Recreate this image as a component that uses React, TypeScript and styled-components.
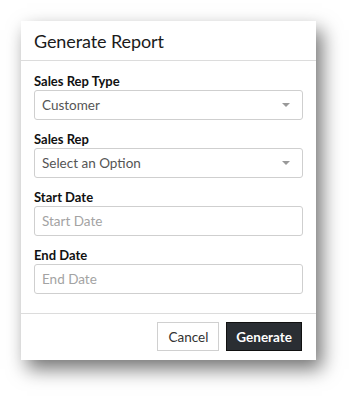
import React from "react";
import styled, { createGlobalStyle } from "styled-components";

const Global = createGlobalStyle`
  html, body { margin: 0; padding: 0; background: #ffffff; }
  body { font-family: Lato, "Liberation Sans", sans-serif; }
  * { box-sizing: border-box; }
`;

const Page = styled.div`
  padding: 21px 0 0 21px;
  width: 358px;
  height: 402px;
`;

const Card = styled.div`
  width: 295px;
  background: #fff;
  box-shadow: 6px 9px 18px rgba(0, 0, 0, 0.55);
  display: flex;
  flex-direction: column;
`;

const Header = styled.div`
  height: 40px;
  padding: 0 13px;
  display: flex;
  align-items: center;
  border-bottom: 1px solid #dcdcdc;
`;

const Title = styled.h1`
  margin: 0;
  font-size: 18px;
  font-weight: 400;
  color: #1b1b1b;
  letter-spacing: -0.1px;
`;

const Body = styled.div`
  padding: 11px 13px 19px;
  display: flex;
  flex-direction: column;
  gap: 10px;
`;

const Field = styled.div`
  display: flex;
  flex-direction: column;
`;

const Label = styled.label`
  font-size: 13px;
  font-weight: 700;
  line-height: 18px;
  color: #111;
`;

const Box = styled.div<{ $placeholder?: boolean }>`
  height: 30px;
  border: 1px solid #cfcfcf;
  border-radius: 3px;
  padding: 0 12px 0 7px;
  display: flex;
  align-items: center;
  justify-content: space-between;
  font-size: 13.5px;
  color: ${(p) => (p.$placeholder ? "#a3a3a3" : "#555")};
`;

const Caret = styled.span`
  width: 0;
  height: 0;
  border-left: 4px solid transparent;
  border-right: 4px solid transparent;
  border-top: 4px solid #999;
`;

const Footer = styled.div`
  border-top: 1px solid #dcdcdc;
  padding: 8px 14px 9px;
  display: flex;
  justify-content: flex-end;
  gap: 7px;
`;

const Button = styled.button<{ $primary?: boolean }>`
  height: 29px;
  padding: 0 ${(p) => (p.$primary ? "9px" : "10px")};
  font-family: Lato, "Liberation Sans", sans-serif;
  font-size: 13.5px;
  font-weight: ${(p) => (p.$primary ? 700 : 400)};
  border: 1px solid ${(p) => (p.$primary ? "#111" : "#d0d0d0")};
  background: ${(p) => (p.$primary ? "#2a2e33" : "#fff")};
  color: ${(p) => (p.$primary ? "#fff" : "#333")};
  border-radius: 0;
`;

export default function App() {
  return (
    <Page>
      <Global />
      <Card>
        <Header>
          <Title>Generate Report</Title>
        </Header>
        <Body>
          <Field>
            <Label>Sales Rep Type</Label>
            <Box>
              Customer
              <Caret />
            </Box>
          </Field>
          <Field>
            <Label>Sales Rep</Label>
            <Box>
              Select an Option
              <Caret />
            </Box>
          </Field>
          <Field>
            <Label>Start Date</Label>
            <Box $placeholder>Start Date</Box>
          </Field>
          <Field>
            <Label>End Date</Label>
            <Box $placeholder>End Date</Box>
          </Field>
        </Body>
        <Footer>
          <Button>Cancel</Button>
          <Button $primary>Generate</Button>
        </Footer>
      </Card>
    </Page>
  );
}
